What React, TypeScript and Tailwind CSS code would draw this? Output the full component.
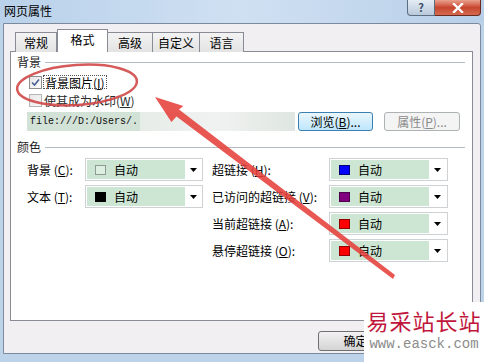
const font = { fontFamily: '"SimSun", "Noto Sans CJK SC", sans-serif' }

const colorRows = [
  { left: { label: '背景', hot: 'C', swatch: 'bg-[#dcefe0] border-[#8f9a92]' }, right: { label: '超链接', hot: 'H', swatch: 'bg-[#0000ff] border-[#00007a]' } },
  { left: { label: '文本', hot: 'T', swatch: 'bg-black border-black' }, right: { label: '已访问的超链接', hot: 'V', swatch: 'bg-[#800080] border-[#4a004a]' } },
  { left: null, right: { label: '当前超链接', hot: 'A', swatch: 'bg-[#ff0000] border-[#900000]' } },
  { left: null, right: { label: '悬停超链接', hot: 'O', swatch: 'bg-[#ff0000] border-[#900000]' } },
]

const tabs = [
  { name: '常规', w: 'w-[42px]' },
  { name: '格式', w: 'w-[51px]', active: true },
  { name: '高级', w: 'w-[46px]' },
  { name: '自定义', w: 'w-[48px]' },
  { name: '语言', w: 'w-[45px]' },
]

export default function App() {
  return (
    <div className="relative w-[484px] h-[362px] overflow-hidden bg-[#bcd3ea] text-[12px] text-black" style={font}>
      <TitleBar />
      <div className="ml-[3px] w-[478px] h-[331px] bg-[#f2eff3] border border-[#7b8a9c] rounded-tr-[3px]">
        <div className="flex items-end h-[28px] pl-[11px]">
          {tabs.map((t) => (
            <Tab key={t.name} {...t} />
          ))}
        </div>
        <div className="ml-[6px] w-[463px] h-[270px] bg-white border border-[#898c95] -mt-px flex flex-col">
          <GroupHeader title="背景" className="mt-[3px]" />
          <div className="flex items-center h-[18px] mt-[4px] pl-[18px]">
            <Checkbox checked />
            <span className="ml-[1px] px-[1px] h-[14px] leading-[13px] border border-dotted border-[#555]">
              背景图片(<u>I</u>)
            </span>
          </div>
          <div className="flex items-center h-[18px] pl-[18px]">
            <Checkbox />
            <span className="ml-[2px] leading-[13px] text-[#2a2a2a]">
              使其成为水印(<u>W</u>)
            </span>
          </div>
          <div className="flex items-center mt-[3px] h-[19px] pl-[16px]">
            <div className="w-[268px] h-[19px] bg-[#d3e2d6] flex items-center pl-[3px] overflow-hidden">
              <span className="text-[10px] leading-[12px] text-[#111]" style={{ fontFamily: '"Liberation Mono", monospace' }}>
                file:///D:/Users/.
              </span>
              <div className="ml-[2px] h-[19px] flex-1 bg-gradient-to-r from-[#e6ece8] via-[#f0f2f1] to-[#dfe6e1]" />
            </div>
            <button className="ml-[3px] w-[75px] h-[19px] rounded-[3px] border border-[#3c7fb1] bg-gradient-to-b from-[#eaf6fd] to-[#bee6fd] text-[12px] leading-[16px]">
              浏览(<u>B</u>)...
            </button>
            <button className="ml-[11px] w-[76px] h-[19px] rounded-[3px] border border-[#adb2b5] bg-[#f4f4f4] text-[12px] leading-[16px] text-[#8a8a8a]">
              属性(<u>P</u>)...
            </button>
          </div>
          <GroupHeader title="颜色" className="mt-[9px]" />
          <div className="flex flex-col gap-[4px] mt-[4px] pl-[16px]">
            {colorRows.map((row, i) => (
              <div key={i} className="flex items-center h-[23px]">
                {row.left ? (
                  <>
                    <Label label={row.left.label} hot={row.left.hot} className="w-[58px]" />
                    <ColorSelect swatch={row.left.swatch} className="w-[118px]" />
                  </>
                ) : (
                  <div className="w-[176px]" />
                )}
                <Label label={row.right.label} hot={row.right.hot} className="ml-[9px] w-[117px]" />
                <ColorSelect swatch={row.right.swatch} className="w-[119px]" />
              </div>
            ))}
          </div>
        </div>
        <div className="flex pl-[314px] pt-[10px]">
          <button className="w-[75px] h-[20px] rounded-[3px] border border-[#707070] bg-gradient-to-b from-[#f2f2f2] to-[#d4d4d4] text-[12px] leading-[18px]">
            确定
          </button>
        </div>
      </div>
      <Overlay />
      <div className="absolute left-[364px] top-[302px] w-[120px] h-[60px] bg-white flex flex-col items-center pt-[3px]">
        <span className="text-[22px] leading-[30px] tracking-[1px] text-[#c0163c]" style={{ fontFamily: '"Noto Sans CJK SC", serif' }}>
          易采站长站
        </span>
        <span className="text-[14px] leading-[20px] text-[#8c8c8c] -mt-[1px]" style={{ fontFamily: '"Liberation Mono", monospace' }}>
          www.easck.com
        </span>
      </div>
    </div>
  )
}

function TitleBar() {
  return (
    <div className="relative h-[23px] bg-gradient-to-r from-[#b9d1ea] via-[#cfe0f2] to-[#b8cfe8] flex items-start">
      <span className="ml-[4px] mt-[4px] text-[12px] leading-[14px]">网页属性</span>
      <div className="ml-auto mr-[3px] flex">
        <div className="w-[28px] h-[16px] rounded-bl-[4px] border border-t-0 border-[#5d6d80] bg-gradient-to-b from-[#e4ecf5] to-[#b9c9da] flex items-center justify-center text-[11px] font-bold text-[#3a4e66] leading-none">
          ?
        </div>
        <div className="w-[46px] h-[16px] rounded-br-[4px] border border-t-0 border-l-0 border-[#6a2a20] bg-gradient-to-b from-[#e8a08f] via-[#c8452e] to-[#d46a50] flex items-center justify-center">
          <svg width="12" height="10" viewBox="0 0 12 10">
            <path d="M2 1 L10 9 M10 1 L2 9" stroke="#fff" strokeWidth="2.4" strokeLinecap="square" />
          </svg>
        </div>
      </div>
    </div>
  )
}

function Tab({ name, w, active }: { name: string; w: string; active?: boolean }) {
  if (active) {
    return (
      <div className={`${w} h-[23px] relative z-10 bg-white border border-b-0 border-[#898c95] flex items-start justify-center pt-[3px] leading-[14px]`}>
        {name}
      </div>
    )
  }
  return (
    <div className={`${w} h-[20px] bg-gradient-to-b from-[#f3f3f3] to-[#e3e3e3] border border-b-0 border-[#898c95] -ml-px first:ml-0 flex items-center justify-center leading-[14px]`}>
      {name}
    </div>
  )
}

function GroupHeader({ title, className }: { title: string; className?: string }) {
  return (
    <div className={`flex items-center h-[14px] pl-[6px] pr-[7px] ${className ?? ''}`}>
      <span className="leading-[14px] text-[#1e1e1e]">{title}</span>
      <div className="ml-[4px] flex-1 border-t border-[#b4bcc2]" />
    </div>
  )
}

function Checkbox({ checked }: { checked?: boolean }) {
  return (
    <div
      className={`w-[13px] h-[13px] border flex items-center justify-center ${
        checked ? 'border-[#8e8f8f] bg-gradient-to-br from-[#e4e4e4] to-[#ffffff]' : 'border-[#b5b5b5] bg-gradient-to-br from-[#e8e8e8] to-[#f8f8f8]'
      }`}
    >
      {checked && (
        <svg width="9" height="9" viewBox="0 0 9 9">
          <path d="M1 4.5 L3.5 7 L8 1.5" fill="none" stroke="#4a5f97" strokeWidth="1.6" />
        </svg>
      )}
    </div>
  )
}

function Label({ label, hot, className }: { label: string; hot: string; className?: string }) {
  return (
    <span className={`leading-[14px] whitespace-nowrap ${className ?? ''}`}>
      {label} (<u>{hot}</u>):
    </span>
  )
}

function ColorSelect({ swatch, className }: { swatch: string; className?: string }) {
  return (
    <div className={`h-[23px] border border-[#cfd2d4] bg-white flex items-center p-[1px] ${className ?? ''}`}>
      <div className="w-[98px] h-[19px] bg-[#cde6d3] flex items-center pl-[8px]">
        <div className={`w-[11px] h-[10px] border ${swatch}`} />
        <span className="ml-[8px] leading-[14px]">自动</span>
      </div>
      <div className="flex-1 flex justify-center">
        <svg width="7" height="4" viewBox="0 0 7 4">
          <path d="M0 0 H7 L3.5 4 Z" fill="#000" />
        </svg>
      </div>
    </div>
  )
}

function Overlay() {
  return (
    <svg className="absolute left-0 top-0 pointer-events-none" width="484" height="362" viewBox="0 0 484 362">
      <ellipse cx="77" cy="85" rx="60" ry="20" transform="rotate(-4 77 85)" fill="none" stroke="#d04848" strokeWidth="2.5" opacity="0.9" />
      <polygon
        points="155,97 183.4,105.9 179,109.5 395,275 393,279 176.5,116.6 171.4,121.9"
        fill="#e5403a"
        opacity="0.88"
      />
    </svg>
  )
}
